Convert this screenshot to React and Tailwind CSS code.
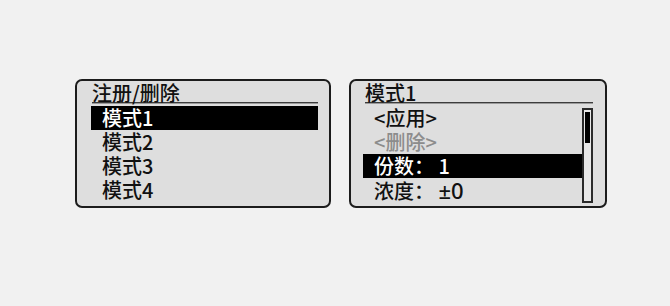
import React from "react";

const font = { fontFamily: '"Noto Sans CJK SC", "Noto Sans", sans-serif' };

function Row({ children, selected, muted }) {
  return (
    <div
      className={
        "h-[24px] leading-[24px] pl-[11px] whitespace-pre " +
        (selected ? "bg-black text-white" : muted ? "text-[#8c8c8c]" : "text-[#111]")
      }
    >
      {children}
    </div>
  );
}

function Header({ text }) {
  return (
    <>
      <div className="h-[18px] leading-[18px] text-[#111] whitespace-pre">{text}</div>
      <div className="h-[2px] border-t border-[#3c3c3c] bg-[#9a9a9a]" />
    </>
  );
}

export default function App() {
  return (
    <div className="h-[306px] w-[670px] bg-[#f1f1f1] text-[20px] font-medium" style={font}>
      <div className="flex gap-[18px] pt-[79px] pl-[75px]">
        <div className="w-[256px] h-[129px] border-2 border-[#1c1c1c] rounded-[7px] bg-[#dedede] pl-[14px] pr-[11px] pt-[3px]">
          <div className="pl-[1px]">
            <Header text="注册/删除" />
          </div>
          <div className="mt-[2px]">
            <Row selected>模式1</Row>
            <Row>模式2</Row>
            <Row>模式3</Row>
            <Row>模式4</Row>
          </div>
        </div>

        <div className="w-[258px] h-[129px] border-2 border-[#1c1c1c] rounded-[7px] bg-[#dedede] pl-[12px] pr-[12px] pt-[3px]">
          <div className="pl-[2px]">
            <Header text="模式1" />
          </div>
          <div className="mt-[2px] flex">
            <div className="w-[219px]">
              <Row>{"<应用>"}</Row>
              <Row muted>{"<删除>"}</Row>
              <Row selected>份数： 1</Row>
              <Row>
                浓度： <span className="font-['Noto_Sans'] text-[22px] leading-[24px]">±0</span>
              </Row>
            </div>
            <div className="mt-[2px] h-[95px] w-[11px] border-2 border-[#2a2a2a] bg-[#e8e8e8] px-[1px] pt-[2px]">
              <div className="h-[31px] w-full bg-black" />
            </div>
          </div>
        </div>
      </div>
    </div>
  );
}
